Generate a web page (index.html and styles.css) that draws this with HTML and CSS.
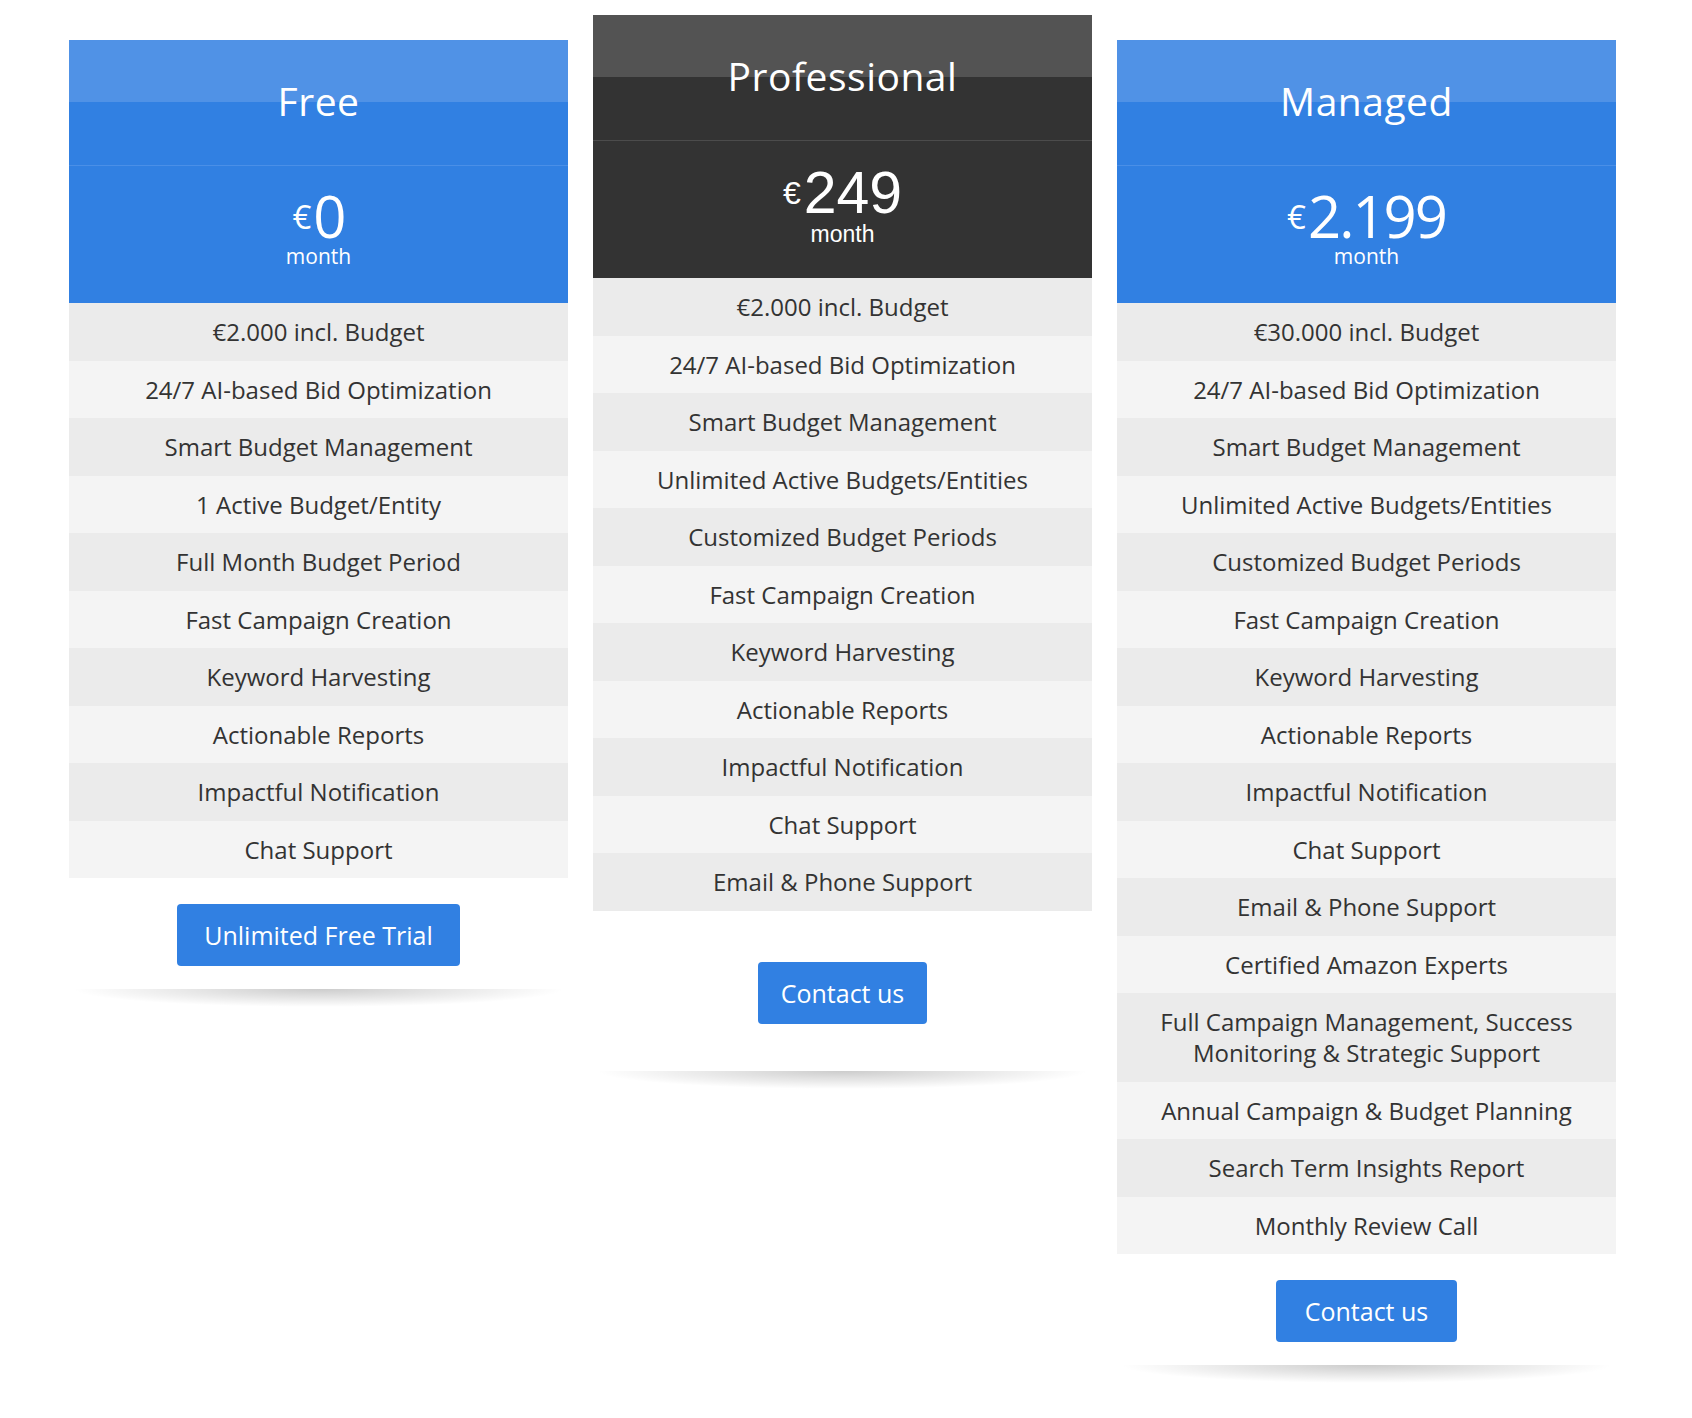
FILE: index.html
```html
<!DOCTYPE html>
<html lang="en">
<head>
    <meta charset="UTF-8">
    <meta name="viewport" content="width=device-width, initial-scale=1.0">
    <title>Pricing</title>
    <link rel="stylesheet" href="styles.css">
</head>
<body>
    <div class="pricing">

        <!-- Free -->
        <div class="plan">
            <div class="plan-card">
                <div class="plan-head"><h2>Free</h2></div>
                <div class="plan-price">
                    <div class="price-line"><span class="currency">€</span><span class="amount">0</span></div>
                    <div class="period">month</div>
                </div>
                <ul class="features">
                    <li>€2.000 incl. Budget</li>
                    <li>24/7 AI-based Bid Optimization</li>
                    <li>Smart Budget Management</li>
                    <li>1 Active Budget/Entity</li>
                    <li>Full Month Budget Period</li>
                    <li>Fast Campaign Creation</li>
                    <li>Keyword Harvesting</li>
                    <li>Actionable Reports</li>
                    <li>Impactful Notification</li>
                    <li>Chat Support</li>
                </ul>
            </div>
            <div class="plan-action">
                <a href="#" class="btn btn-trial">Unlimited Free Trial</a>
            </div>
            <div class="plan-shadow"></div>
        </div>

        <!-- Professional -->
        <div class="plan plan-featured">
            <div class="plan-card">
                <div class="plan-head"><h2>Professional</h2></div>
                <div class="plan-price">
                    <div class="price-line"><span class="currency">€</span><span class="amount">249</span></div>
                    <div class="period">month</div>
                </div>
                <ul class="features">
                    <li>€2.000 incl. Budget</li>
                    <li>24/7 AI-based Bid Optimization</li>
                    <li>Smart Budget Management</li>
                    <li>Unlimited Active Budgets/Entities</li>
                    <li>Customized Budget Periods</li>
                    <li>Fast Campaign Creation</li>
                    <li>Keyword Harvesting</li>
                    <li>Actionable Reports</li>
                    <li>Impactful Notification</li>
                    <li>Chat Support</li>
                    <li>Email &amp; Phone Support</li>
                </ul>
            </div>
            <div class="plan-action">
                <a href="#" class="btn">Contact us</a>
            </div>
            <div class="plan-shadow"></div>
        </div>

        <!-- Managed -->
        <div class="plan">
            <div class="plan-card">
                <div class="plan-head"><h2>Managed</h2></div>
                <div class="plan-price">
                    <div class="price-line"><span class="currency">€</span><span class="amount">2.199</span></div>
                    <div class="period">month</div>
                </div>
                <ul class="features">
                    <li>€30.000 incl. Budget</li>
                    <li>24/7 AI-based Bid Optimization</li>
                    <li>Smart Budget Management</li>
                    <li>Unlimited Active Budgets/Entities</li>
                    <li>Customized Budget Periods</li>
                    <li>Fast Campaign Creation</li>
                    <li>Keyword Harvesting</li>
                    <li>Actionable Reports</li>
                    <li>Impactful Notification</li>
                    <li>Chat Support</li>
                    <li>Email &amp; Phone Support</li>
                    <li>Certified Amazon Experts</li>
                    <li>Full Campaign Management, Success Monitoring &amp; Strategic Support</li>
                    <li>Annual Campaign &amp; Budget Planning</li>
                    <li>Search Term Insights Report</li>
                    <li>Monthly Review Call</li>
                </ul>
            </div>
            <div class="plan-action">
                <a href="#" class="btn btn-wide">Contact us</a>
            </div>
            <div class="plan-shadow"></div>
        </div>

    </div>
</body>
</html>
```

FILE: styles.css
```css
/* General */
body {
    font-family: "Open Sans", Arial, sans-serif;
    background-color: #fff;
    color: #333;
    margin: 0;
    padding: 0;
}

/* Pricing row */
.pricing {
    display: flex;
    align-items: flex-start;
    gap: 25px;
    padding: 40px 0 0 69px;
}

.plan {
    width: 499px;
    flex-shrink: 0;
}

.plan-featured {
    margin-top: -25px;
}

/* Header */
.plan-head {
    height: 125px;
    box-sizing: border-box;
    padding-bottom: 4px;
    display: flex;
    align-items: center;
    justify-content: center;
    background: linear-gradient(to bottom, #5092e6 50%, #3180e2 50%);
}

.plan-head h2 {
    margin: 0;
    color: #fff;
    font-size: 39px;
    font-weight: 400;
    line-height: 1;
    letter-spacing: 0.5px;
}

.plan-featured .plan-head {
    background: linear-gradient(to bottom, #535353 50%, #333 50%);
}

/* Price */
.plan-price {
    height: 138px;
    box-sizing: border-box;
    padding-top: 21px;
    border-top: 1px solid #4a8fe7;
    background: #3180e2;
    color: #fff;
    text-align: center;
}

.price-line {
    line-height: 1;
}

.currency {
    font-size: 33px;
    vertical-align: 9px;
    margin-right: 2px;
}

.amount {
    font-size: 58px;
    letter-spacing: -2px;
}

.period {
    font-size: 21px;
    line-height: 1;
    margin-top: 1px;
}

.plan-featured .plan-price {
    background: #333;
    border-top-color: #4c4c4c;
    padding-top: 23px;
    font-family: "Liberation Sans", Arial, sans-serif;
}

.plan-featured .currency {
    font-size: 32px;
    vertical-align: 9px;
    margin-right: 3px;
}

.plan-featured .amount {
    font-size: 59px;
    letter-spacing: 0;
}

.plan-featured .period {
    font-size: 23px;
    margin-top: 0;
}

/* Features */
.features {
    list-style: none;
    margin: 0;
    padding: 0;
}

.features li {
    padding: 13.25px 20px;
    font-size: 24px;
    line-height: 31px;
    text-align: center;
    background: #ebebeb;
}

.features li:nth-child(even) {
    background: #f4f4f4;
}

/* Button */
.plan-action {
    padding-top: 26px;
    text-align: center;
}

.plan-featured .plan-action {
    padding-top: 51px;
}

.btn {
    display: inline-block;
    padding: 14px 23px;
    background: #3180e2;
    color: #fff;
    font-size: 25px;
    line-height: 34px;
    text-decoration: none;
    border-radius: 4px;
}

.btn-trial {
    padding: 14px 27px;
}

.btn-wide {
    padding: 14px 29px;
}

/* Shadow under each plan */
.plan-shadow {
    height: 18px;
    margin: 23px 4px 0;
    background: radial-gradient(ellipse 50% 100% at 50% 0, rgba(0, 0, 0, 0.2), rgba(0, 0, 0, 0) 100%);
}

.plan-featured .plan-shadow {
    margin-top: 47px;
}
```
